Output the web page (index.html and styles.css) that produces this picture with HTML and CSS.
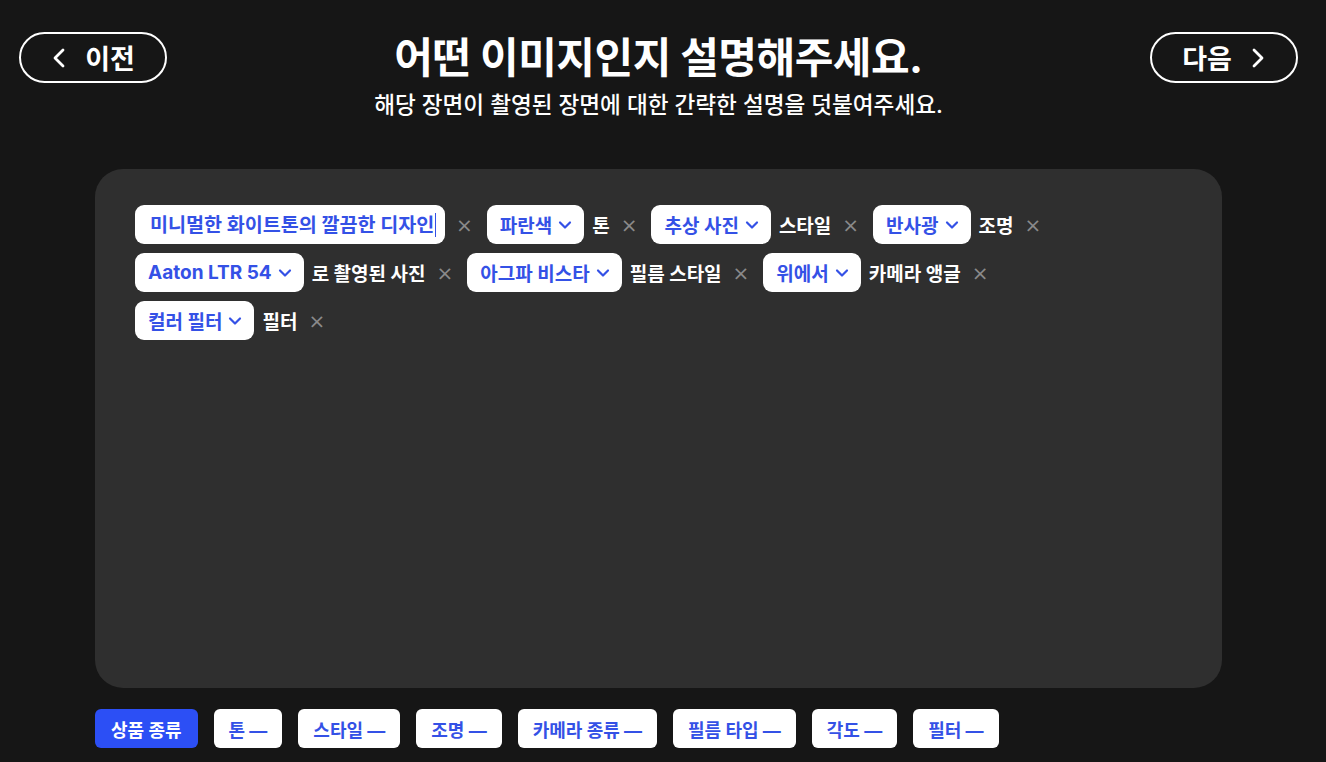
FILE: index.html
```html
<!DOCTYPE html>
<html lang="ko">
<head>
  <meta charset="UTF-8">
  <title>어떤 이미지인지 설명해주세요.</title>
  <link rel="stylesheet" href="styles.css">
</head>
<body>
  <div class="page">
    <header class="top">
      <a href="#" class="nav-button">
        <svg class="nav-icon" viewBox="0 0 16 22" width="16" height="22"><path d="M12 3 L4 11 L12 19" fill="none" stroke="#fff" stroke-width="2.8" stroke-linecap="round" stroke-linejoin="round"/></svg>
        이전
      </a>
      <div class="heading">
        <h1>어떤 이미지인지 설명해주세요.</h1>
        <p>해당 장면이 촬영된 장면에 대한 간략한 설명을 덧붙여주세요.</p>
      </div>
      <a href="#" class="nav-button">
        다음
        <svg class="nav-icon" viewBox="0 0 16 22" width="16" height="22"><path d="M4 3 L12 11 L4 19" fill="none" stroke="#fff" stroke-width="2.8" stroke-linecap="round" stroke-linejoin="round"/></svg>
      </a>
    </header>

    <div class="panel">
      <div class="sentence">
        <div class="segment">
          <div class="chip chip-input"><span class="caret">미니멀한 화이트톤의 깔끔한 디자인</span></div>
          <span class="remove">×</span>
        </div>

        <div class="segment">
          <div class="chip">파란색 <svg class="down" viewBox="0 0 14 10" width="14" height="10"><path d="M2 2.5 L7 7.5 L12 2.5" fill="none" stroke="#3451e6" stroke-width="2.2" stroke-linecap="round" stroke-linejoin="round"/></svg></div>
          <span class="word">톤</span>
          <span class="remove">×</span>
        </div>

        <div class="segment">
          <div class="chip">추상 사진 <svg class="down" viewBox="0 0 14 10" width="14" height="10"><path d="M2 2.5 L7 7.5 L12 2.5" fill="none" stroke="#3451e6" stroke-width="2.2" stroke-linecap="round" stroke-linejoin="round"/></svg></div>
          <span class="word">스타일</span>
          <span class="remove">×</span>
        </div>

        <div class="segment">
          <div class="chip">반사광 <svg class="down" viewBox="0 0 14 10" width="14" height="10"><path d="M2 2.5 L7 7.5 L12 2.5" fill="none" stroke="#3451e6" stroke-width="2.2" stroke-linecap="round" stroke-linejoin="round"/></svg></div>
          <span class="word">조명</span>
          <span class="remove">×</span>
        </div>

        <div class="segment">
          <div class="chip">Aaton LTR 54 <svg class="down" viewBox="0 0 14 10" width="14" height="10"><path d="M2 2.5 L7 7.5 L12 2.5" fill="none" stroke="#3451e6" stroke-width="2.2" stroke-linecap="round" stroke-linejoin="round"/></svg></div>
          <span class="word">로 촬영된 사진</span>
          <span class="remove">×</span>
        </div>

        <div class="segment">
          <div class="chip">아그파 비스타 <svg class="down" viewBox="0 0 14 10" width="14" height="10"><path d="M2 2.5 L7 7.5 L12 2.5" fill="none" stroke="#3451e6" stroke-width="2.2" stroke-linecap="round" stroke-linejoin="round"/></svg></div>
          <span class="word">필름 스타일</span>
          <span class="remove">×</span>
        </div>

        <div class="segment">
          <div class="chip">위에서 <svg class="down" viewBox="0 0 14 10" width="14" height="10"><path d="M2 2.5 L7 7.5 L12 2.5" fill="none" stroke="#3451e6" stroke-width="2.2" stroke-linecap="round" stroke-linejoin="round"/></svg></div>
          <span class="word">카메라 앵글</span>
          <span class="remove">×</span>
        </div>

        <div class="segment">
          <div class="chip">컬러 필터 <svg class="down" viewBox="0 0 14 10" width="14" height="10"><path d="M2 2.5 L7 7.5 L12 2.5" fill="none" stroke="#3451e6" stroke-width="2.2" stroke-linecap="round" stroke-linejoin="round"/></svg></div>
          <span class="word">필터</span>
          <span class="remove">×</span>
        </div>
      </div>
    </div>

    <div class="tags">
      <a href="#" class="tag active">상품 종류</a>
      <a href="#" class="tag">톤 —</a>
      <a href="#" class="tag">스타일 —</a>
      <a href="#" class="tag">조명 —</a>
      <a href="#" class="tag">카메라 종류 —</a>
      <a href="#" class="tag">필름 타입 —</a>
      <a href="#" class="tag">각도 —</a>
      <a href="#" class="tag">필터 —</a>
    </div>
  </div>
</body>
</html>
```

FILE: styles.css
```css
* {
  box-sizing: border-box;
  margin: 0;
}

body {
  background: #161616;
  color: #fff;
  font-family: Inter, "Noto Sans CJK KR", sans-serif;
  overflow: hidden;
}

.page {
  width: 1279px;
  margin-left: 19px;
  padding-top: 32px;
}

.top {
  display: flex;
  justify-content: space-between;
  align-items: flex-start;
  height: 137px;
}

.nav-button {
  display: flex;
  align-items: center;
  justify-content: center;
  gap: 18px;
  width: 148px;
  height: 51px;
  border: 2px solid #fff;
  border-radius: 26px;
  color: #fff;
  font-size: 27px;
  font-weight: 700;
  text-decoration: none;
}

.nav-icon {
  display: block;
}

.heading {
  text-align: center;
}

.heading h1 {
  font-size: 42px;
  font-weight: 700;
  line-height: 52px;
  letter-spacing: -0.5px;
}

.heading p {
  margin-top: 6px;
  font-size: 22.6px;
  font-weight: 500;
  line-height: 30px;
}

.panel {
  margin: 0 76px;
  height: 519px;
  background: #2f2f2f;
  border-radius: 28px;
  padding: 36px 40px;
}

.sentence {
  display: flex;
  flex-wrap: wrap;
  column-gap: 14px;
  row-gap: 9px;
}

.segment {
  display: flex;
  align-items: center;
  gap: 8px;
}

.chip {
  display: flex;
  align-items: center;
  gap: 6px;
  height: 39px;
  padding: 0 12px 0 13px;
  background: #fff;
  border-radius: 9px;
  color: #3451e6;
  font-size: 19px;
  font-weight: 700;
  white-space: nowrap;
}

.chip-input {
  width: 310px;
  padding: 0 4px 0 15px;
  font-size: 19.6px;
  overflow: hidden;
}

.caret {
  border-right: 1.5px solid #3451e6;
  padding-right: 1px;
  line-height: 24px;
}

.down {
  display: block;
}

.word {
  font-size: 19px;
  font-weight: 700;
  color: #fff;
}

.remove {
  margin-left: 3px;
  color: #8a8a8a;
  font-family: "DejaVu Sans", sans-serif;
  font-size: 20px;
  line-height: 1;
}

.tags {
  display: flex;
  gap: 16px;
  margin: 21px 76px 0;
}

.tag {
  display: flex;
  align-items: center;
  height: 39px;
  padding: 0 15px;
  background: #fff;
  border-radius: 6px;
  color: #3451e6;
  font-size: 18px;
  font-weight: 700;
  text-decoration: none;
}

.tag.active {
  padding: 0 16px;
  background: #2c4ff5;
  color: #fff;
}
```
